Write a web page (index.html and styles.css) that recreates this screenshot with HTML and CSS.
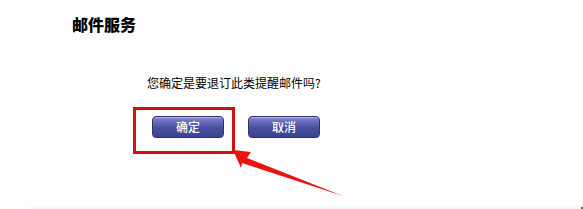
FILE: index.html
```html
<!DOCTYPE html>
<html lang="zh">
<head>
<meta charset="utf-8">
<title>邮件服务</title>
<link rel="stylesheet" href="styles.css">
</head>
<body>
<div class="page">
  <h1 class="title">邮件服务</h1>
  <p class="question">您确定是要退订此类提醒邮件吗?</p>
  <div class="actions">
    <button class="btn">确定</button>
    <button class="btn">取消</button>
  </div>
  <div class="footer-line"><span class="dot"></span></div>
  <div class="highlight-box"></div>
  <svg class="arrow" width="583" height="209" viewBox="0 0 583 209">
    <polygon points="233,150 251,152 247,158 343,196 242,163 241,168" fill="#ee1111"/>
  </svg>
</div>
</body>
</html>
```
FILE: styles.css
```css
html, body {
  margin: 0;
  padding: 0;
  background: #ffffff;
}
.page {
  position: relative;
  width: 583px;
  height: 209px;
  overflow: hidden;
  font-family: "Noto Sans CJK SC", "Liberation Sans", sans-serif;
  display: flex;
  flex-direction: column;
}
.title {
  margin: 13px 0 0 72px;
  font-size: 16px;
  line-height: 22px;
  font-weight: 900;
  color: #000;
}
.question {
  margin: 39px 0 0 147px;
  font-size: 12px;
  line-height: 18px;
  color: #000;
}
.actions {
  display: flex;
  gap: 24px;
  margin: 24px 0 0 152px;
}
.btn {
  width: 72px;
  height: 22px;
  padding: 0;
  border: 1px solid #2c2f72;
  border-radius: 4px;
  background: linear-gradient(to bottom, #8f93d3 0%, #6a6fbf 20%, #4a4f9f 55%, #3e4390 100%);
  box-shadow: inset 0 1px 0 rgba(255,255,255,0.35);
  color: #ffffff;
  font-family: "Noto Sans CJK SC", "Liberation Sans", sans-serif;
  font-size: 12px;
  font-weight: 500;
  line-height: 20px;
}
.footer-line {
  margin: auto 0 0 30px;
  height: 3px;
  background: #f0fbfb;
  position: relative;
}
.dot {
  position: absolute;
  right: 0;
  bottom: 0;
  width: 2px;
  height: 2px;
  background: #3f6fa0;
}
.highlight-box {
  position: absolute;
  left: 133px;
  top: 107px;
  width: 96px;
  height: 41px;
  border: 3px solid #d21010;
}
.arrow {
  position: absolute;
  left: 0;
  top: 0;
}
```
